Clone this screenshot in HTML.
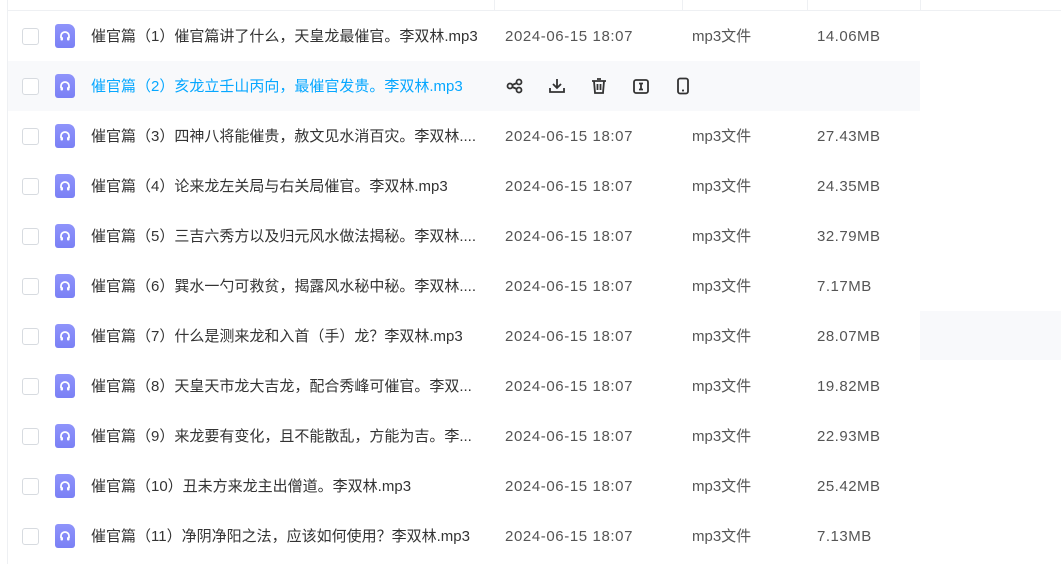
<!DOCTYPE html>
<html><head><meta charset="utf-8"><style>
body{margin:0;width:1061px;height:564px;overflow:hidden;background:#fff;font-family:"Liberation Sans","Noto Sans CJK SC",sans-serif;font-size:15px;color:#333;position:relative}
.lb{position:absolute;left:7px;top:0;width:1px;height:564px;background:#eef0f3}
.hd{position:absolute;top:10px;left:7px;width:1054px;height:1px;background:#eef0f3}
.vd{position:absolute;top:0;width:1px;height:10px;background:#eef0f3}
.row{position:absolute;left:8px;width:912px;height:50px}
.row.hl{background:#f8f9fb}
.cb{position:absolute;left:14px;top:17px;width:15px;height:15px;border:1px solid #d7dbe0;border-radius:3px;background:#fff}
.ic{position:absolute;left:47px;top:13px;width:20px;height:24px;background:linear-gradient(#8f94fb,#7a80f5);border-radius:3px 7px 3px 3px}
.ic svg{position:absolute;left:4px;top:6px}
.t{position:absolute;top:16px;white-space:nowrap;line-height:20px}
.n{left:83px;color:#333}
.hl .n{color:#06a7ff}
.d{left:497px;color:#555;letter-spacing:0.6px}
.y{left:684px;color:#555}
.s{left:809px;color:#555;letter-spacing:0.5px}
.acts{position:absolute;left:497px;top:15px}
.acts svg{position:absolute;top:0}
</style></head><body>
<div class="lb"></div><div class="hd"></div>
<div class="vd" style="left:494px"></div><div class="vd" style="left:682px"></div><div class="vd" style="left:807px"></div><div class="vd" style="left:920px"></div>
<div style="position:absolute;left:920px;top:311px;width:141px;height:49px;background:#f8f9fb"></div>

<div class="row" style="top:11px"><div class="cb"></div><div class="ic"><svg width="12" height="12" viewBox="0 0 12 12"><path d="M2 8V6a4 4 0 0 1 8 0v2" fill="none" stroke="#fff" stroke-width="1.8"/><rect x="1.5" y="7" width="2.5" height="3.5" rx="1" fill="#fff"/><rect x="8" y="7" width="2.5" height="3.5" rx="1" fill="#fff"/></svg></div><span class="t n">催官篇（1）催官篇讲了什么，天皇龙最催官。李双林.mp3</span><span class="t d">2024-06-15 18:07</span><span class="t y">mp3文件</span><span class="t s">14.06MB</span></div>

<div class="row hl" style="top:61px"><div class="cb"></div><div class="ic"><svg width="12" height="12" viewBox="0 0 12 12"><path d="M2 8V6a4 4 0 0 1 8 0v2" fill="none" stroke="#fff" stroke-width="1.8"/><rect x="1.5" y="7" width="2.5" height="3.5" rx="1" fill="#fff"/><rect x="8" y="7" width="2.5" height="3.5" rx="1" fill="#fff"/></svg></div><span class="t n">催官篇（2）亥龙立壬山丙向，最催官发贵。李双林.mp3</span>
<div class="acts">
<svg style="left:0" width="20" height="20" viewBox="0 0 20 20" fill="none" stroke="#333" stroke-width="1.8"><circle cx="5" cy="10" r="2.5"/><circle cx="14" cy="6" r="2.5"/><circle cx="14" cy="14" r="2.5"/><path d="M7.3 9l4.5-2M7.3 11l4.5 2"/></svg>
<svg style="left:42px" width="20" height="20" viewBox="0 0 20 20" fill="none" stroke="#333" stroke-width="1.8"><path d="M10 3v9M6 8l4 4 4-4M3 12v4h14v-4"/></svg>
<svg style="left:84px" width="20" height="20" viewBox="0 0 20 20" fill="none" stroke="#333" stroke-width="1.8"><path d="M3 5h14M8 3h4M5 5l1 12h8l1-12M8.5 8v6M11.5 8v6"/></svg>
<svg style="left:126px" width="20" height="20" viewBox="0 0 20 20" fill="none" stroke="#333" stroke-width="1.8"><rect x="3" y="4" width="14" height="13" rx="2"/><path d="M8 7.5h4M10 7.5v6M8 13.5h4"/></svg>
<svg style="left:168px" width="20" height="20" viewBox="0 0 20 20" fill="none" stroke="#333" stroke-width="1.8"><rect x="5" y="2.5" width="10" height="15" rx="2"/><path d="M9 14.5h2"/></svg>
</div></div>

<div class="row" style="top:111px"><div class="cb"></div><div class="ic"><svg width="12" height="12" viewBox="0 0 12 12"><path d="M2 8V6a4 4 0 0 1 8 0v2" fill="none" stroke="#fff" stroke-width="1.8"/><rect x="1.5" y="7" width="2.5" height="3.5" rx="1" fill="#fff"/><rect x="8" y="7" width="2.5" height="3.5" rx="1" fill="#fff"/></svg></div><span class="t n">催官篇（3）四神八将能催贵，赦文见水消百灾。李双林....</span><span class="t d">2024-06-15 18:07</span><span class="t y">mp3文件</span><span class="t s">27.43MB</span></div>

<div class="row" style="top:161px"><div class="cb"></div><div class="ic"><svg width="12" height="12" viewBox="0 0 12 12"><path d="M2 8V6a4 4 0 0 1 8 0v2" fill="none" stroke="#fff" stroke-width="1.8"/><rect x="1.5" y="7" width="2.5" height="3.5" rx="1" fill="#fff"/><rect x="8" y="7" width="2.5" height="3.5" rx="1" fill="#fff"/></svg></div><span class="t n">催官篇（4）论来龙左关局与右关局催官。李双林.mp3</span><span class="t d">2024-06-15 18:07</span><span class="t y">mp3文件</span><span class="t s">24.35MB</span></div>

<div class="row" style="top:211px"><div class="cb"></div><div class="ic"><svg width="12" height="12" viewBox="0 0 12 12"><path d="M2 8V6a4 4 0 0 1 8 0v2" fill="none" stroke="#fff" stroke-width="1.8"/><rect x="1.5" y="7" width="2.5" height="3.5" rx="1" fill="#fff"/><rect x="8" y="7" width="2.5" height="3.5" rx="1" fill="#fff"/></svg></div><span class="t n">催官篇（5）三吉六秀方以及归元风水做法揭秘。李双林....</span><span class="t d">2024-06-15 18:07</span><span class="t y">mp3文件</span><span class="t s">32.79MB</span></div>

<div class="row" style="top:261px"><div class="cb"></div><div class="ic"><svg width="12" height="12" viewBox="0 0 12 12"><path d="M2 8V6a4 4 0 0 1 8 0v2" fill="none" stroke="#fff" stroke-width="1.8"/><rect x="1.5" y="7" width="2.5" height="3.5" rx="1" fill="#fff"/><rect x="8" y="7" width="2.5" height="3.5" rx="1" fill="#fff"/></svg></div><span class="t n">催官篇（6）巽水一勺可救贫，揭露风水秘中秘。李双林....</span><span class="t d">2024-06-15 18:07</span><span class="t y">mp3文件</span><span class="t s">7.17MB</span></div>

<div class="row" style="top:311px"><div class="cb"></div><div class="ic"><svg width="12" height="12" viewBox="0 0 12 12"><path d="M2 8V6a4 4 0 0 1 8 0v2" fill="none" stroke="#fff" stroke-width="1.8"/><rect x="1.5" y="7" width="2.5" height="3.5" rx="1" fill="#fff"/><rect x="8" y="7" width="2.5" height="3.5" rx="1" fill="#fff"/></svg></div><span class="t n">催官篇（7）什么是测来龙和入首（手）龙？李双林.mp3</span><span class="t d">2024-06-15 18:07</span><span class="t y">mp3文件</span><span class="t s">28.07MB</span></div>

<div class="row" style="top:361px"><div class="cb"></div><div class="ic"><svg width="12" height="12" viewBox="0 0 12 12"><path d="M2 8V6a4 4 0 0 1 8 0v2" fill="none" stroke="#fff" stroke-width="1.8"/><rect x="1.5" y="7" width="2.5" height="3.5" rx="1" fill="#fff"/><rect x="8" y="7" width="2.5" height="3.5" rx="1" fill="#fff"/></svg></div><span class="t n">催官篇（8）天皇天市龙大吉龙，配合秀峰可催官。李双...</span><span class="t d">2024-06-15 18:07</span><span class="t y">mp3文件</span><span class="t s">19.82MB</span></div>

<div class="row" style="top:411px"><div class="cb"></div><div class="ic"><svg width="12" height="12" viewBox="0 0 12 12"><path d="M2 8V6a4 4 0 0 1 8 0v2" fill="none" stroke="#fff" stroke-width="1.8"/><rect x="1.5" y="7" width="2.5" height="3.5" rx="1" fill="#fff"/><rect x="8" y="7" width="2.5" height="3.5" rx="1" fill="#fff"/></svg></div><span class="t n">催官篇（9）来龙要有变化，且不能散乱，方能为吉。李...</span><span class="t d">2024-06-15 18:07</span><span class="t y">mp3文件</span><span class="t s">22.93MB</span></div>

<div class="row" style="top:461px"><div class="cb"></div><div class="ic"><svg width="12" height="12" viewBox="0 0 12 12"><path d="M2 8V6a4 4 0 0 1 8 0v2" fill="none" stroke="#fff" stroke-width="1.8"/><rect x="1.5" y="7" width="2.5" height="3.5" rx="1" fill="#fff"/><rect x="8" y="7" width="2.5" height="3.5" rx="1" fill="#fff"/></svg></div><span class="t n">催官篇（10）丑未方来龙主出僧道。李双林.mp3</span><span class="t d">2024-06-15 18:07</span><span class="t y">mp3文件</span><span class="t s">25.42MB</span></div>

<div class="row" style="top:511px"><div class="cb"></div><div class="ic"><svg width="12" height="12" viewBox="0 0 12 12"><path d="M2 8V6a4 4 0 0 1 8 0v2" fill="none" stroke="#fff" stroke-width="1.8"/><rect x="1.5" y="7" width="2.5" height="3.5" rx="1" fill="#fff"/><rect x="8" y="7" width="2.5" height="3.5" rx="1" fill="#fff"/></svg></div><span class="t n">催官篇（11）净阴净阳之法，应该如何使用？李双林.mp3</span><span class="t d">2024-06-15 18:07</span><span class="t y">mp3文件</span><span class="t s">7.13MB</span></div>
</body></html>
